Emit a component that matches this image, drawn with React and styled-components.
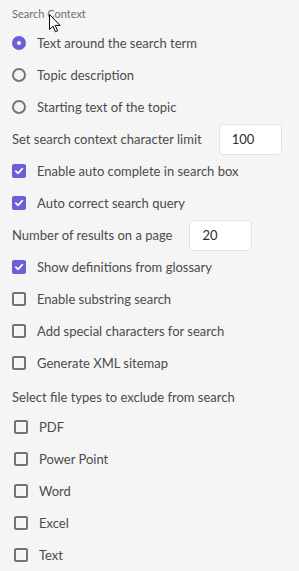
import React from "react";
import styled, { createGlobalStyle } from "styled-components";

const GlobalStyle = createGlobalStyle`
  html, body {
    margin: 0;
    padding: 0;
    background: #f5f5f5;
  }
  body {
    font-family: Lato, "Noto Sans", sans-serif;
    color: #4b4b4b;
  }
`;

const Panel = styled.div`
  position: relative;
  width: 299px;
  height: 571px;
  padding: 6px 0 0 12px;
  box-sizing: border-box;
  overflow: hidden;
`;

const SectionLabel = styled.div`
  font-size: 11px;
  line-height: 16px;
  color: #6e6e6e;
  height: 21px;
`;

const Row = styled.label`
  display: flex;
  align-items: center;
  gap: 11px;
  height: 32px;
  font-size: 13px;
  padding-left: ${({ $indent }) => $indent || 0}px;
`;

const FieldRow = styled.div`
  display: flex;
  align-items: center;
  gap: 17px;
  height: 32px;
  font-size: 13px;
`;

const GroupLabel = styled.div`
  display: flex;
  align-items: center;
  height: 32px;
  margin-top: 2px;
  font-size: 13px;
`;

const FileList = styled.div`
  margin-top: -2px;
`;

const Radio = styled.span`
  width: 14px;
  height: 14px;
  border-radius: 50%;
  box-sizing: border-box;
  flex-shrink: 0;
  background: ${({ $on }) => ($on ? "#fff" : "transparent")};
  border: ${({ $on }) => ($on ? "5px solid #6b5fd6" : "2px solid #747474")};
`;

const Box = styled.span`
  width: 14px;
  height: 14px;
  border-radius: 2px;
  box-sizing: border-box;
  flex-shrink: 0;
  display: flex;
  align-items: center;
  justify-content: center;
  background: ${({ $on }) => ($on ? "#6b5fd6" : "transparent")};
  border: ${({ $on }) => ($on ? "none" : "2px solid #747474")};
`;

const NumberInput = styled.div`
  width: 63px;
  height: 31px;
  box-sizing: border-box;
  background: #fff;
  border: 1px solid #e3e3e3;
  border-radius: 4px;
  padding-left: 12px;
  display: flex;
  align-items: center;
  font-size: 13px;
  color: #2c2c2c;
`;

const Cursor = styled.svg`
  position: absolute;
  left: 49px;
  top: 14px;
`;

const Check = () => (
  <svg width="10" height="10" viewBox="0 0 10 10">
    <path
      d="M1.8 5.2 L4 7.4 L8.3 2.6"
      fill="none"
      stroke="#fff"
      strokeWidth="1.8"
      strokeLinecap="round"
      strokeLinejoin="round"
    />
  </svg>
);

const CheckRow = ({ on, indent, children }) => (
  <Row $indent={indent}>
    <Box $on={on}>{on && <Check />}</Box>
    {children}
  </Row>
);

const RadioRow = ({ on, children }) => (
  <Row>
    <Radio $on={on} />
    {children}
  </Row>
);

const fileTypes = ["PDF", "Power Point", "Word", "Excel", "Text"];

export default function App() {
  return (
    <>
      <GlobalStyle />
      <Panel>
        <SectionLabel>Search Context</SectionLabel>
        <RadioRow on>Text around the search term</RadioRow>
        <RadioRow>Topic description</RadioRow>
        <RadioRow>Starting text of the topic</RadioRow>
        <FieldRow>
          Set search context character limit
          <NumberInput>100</NumberInput>
        </FieldRow>
        <CheckRow on>Enable auto complete in search box</CheckRow>
        <CheckRow on>Auto correct search query</CheckRow>
        <FieldRow>
          Number of results on a page
          <NumberInput>20</NumberInput>
        </FieldRow>
        <CheckRow on>Show definitions from glossary</CheckRow>
        <CheckRow>Enable substring search</CheckRow>
        <CheckRow>Add special characters for search</CheckRow>
        <CheckRow>Generate XML sitemap</CheckRow>
        <GroupLabel>Select file types to exclude from search</GroupLabel>
        <FileList>
          {fileTypes.map((t) => (
            <CheckRow key={t} indent={2}>
              {t}
            </CheckRow>
          ))}
        </FileList>
        <Cursor width="12" height="19" viewBox="0 0 12 19">
          <path
            d="M0.5 0.5 L0.5 15.5 L4 12.2 L6.4 17.8 L8.6 16.8 L6.2 11.4 L11 11.4 Z"
            fill="#fff"
            stroke="#000"
            strokeWidth="1"
            strokeLinejoin="round"
          />
        </Cursor>
      </Panel>
    </>
  );
}
